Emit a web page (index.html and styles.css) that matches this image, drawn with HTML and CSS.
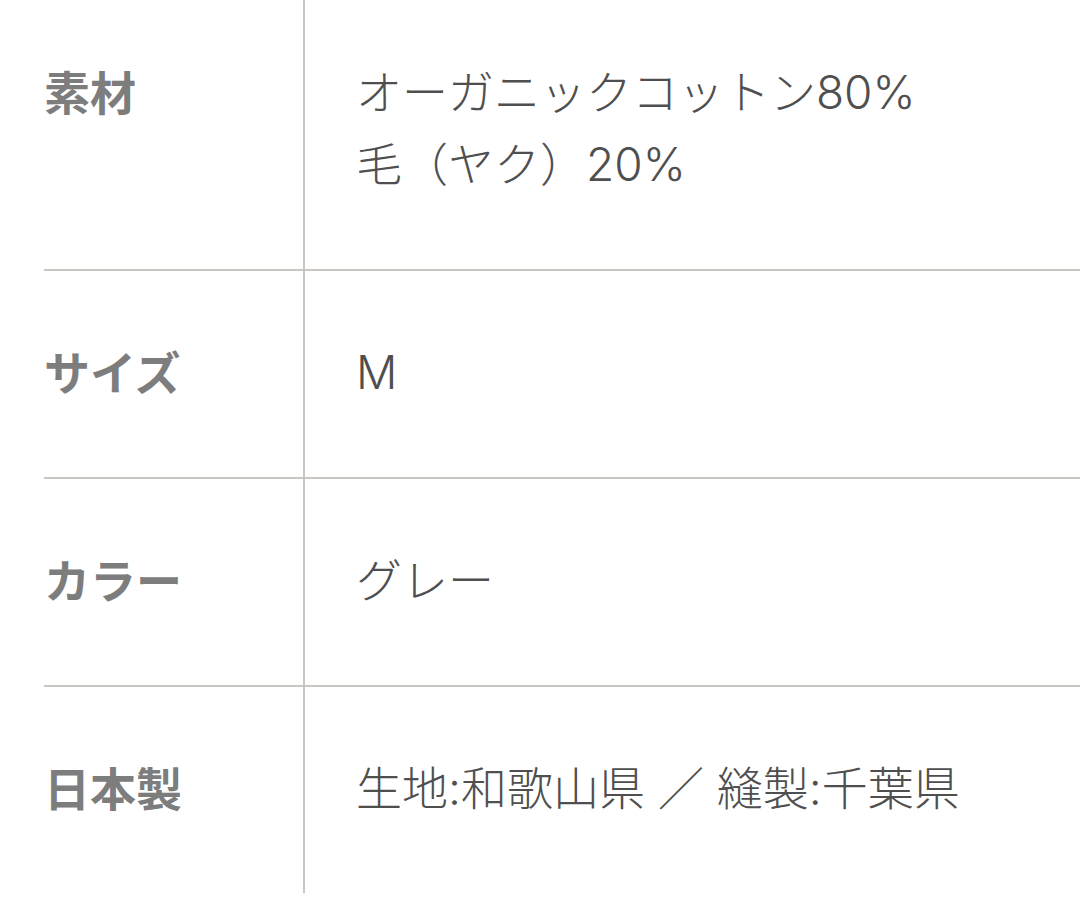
FILE: index.html
```html
<!DOCTYPE html>
<html lang="ja">
<head>
<meta charset="utf-8">
<link rel="stylesheet" href="styles.css">
</head>
<body>
<div class="spec">
  <div class="row">
    <div class="label">素材</div>
    <div class="value">オーガニックコットン80%<br>毛（ヤク）20%</div>
  </div>
  <div class="row">
    <div class="label">サイズ</div>
    <div class="value">M</div>
  </div>
  <div class="row">
    <div class="label">カラー</div>
    <div class="value">グレー</div>
  </div>
  <div class="row last">
    <div class="label">日本製</div>
    <div class="value">生地:和歌山県 ／ 縫製:千葉県</div>
  </div>
</div>
</body>
</html>
```

FILE: styles.css
```css
html, body {
  margin: 0;
  padding: 0;
  background: #ffffff;
}
body {
  width: 1080px;
  height: 924px;
  overflow: hidden;
  font-family: "Noto Sans CJK JP", "Noto Sans", sans-serif;
}
.spec {
  margin-left: 44px;
  margin-top: -9px;
}
.row {
  display: grid;
  grid-template-columns: 261px 1fr;
  border-bottom: 2px solid #c9c5c1;
}
.row.last {
  border-bottom: none;
}
.label {
  border-right: 2px solid #c9c5c1;
  padding: 63px 0 71px 0;
  font-size: 46px;
  line-height: 72px;
  font-weight: 700;
  color: #7d7d7d;
  display: flex;
  align-items: center;
}
.row:first-child .label {
  align-items: flex-start;
}
.value {
  padding: 65px 0 69px 51px;
  font-family: "Inter", "Noto Sans CJK JP", sans-serif;
  font-size: 46px;
  line-height: 72px;
  font-weight: 300;
  color: #4f4f4f;
  white-space: nowrap;
}
```
